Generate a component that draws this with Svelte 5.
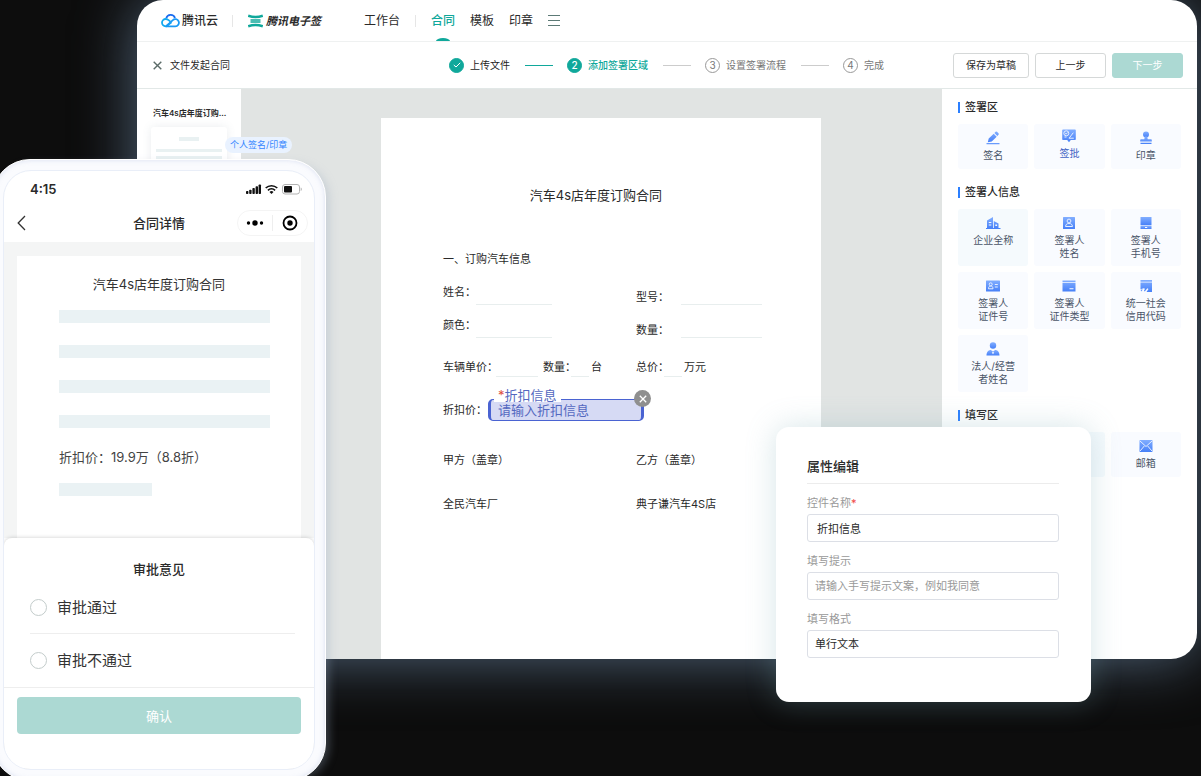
<script>
  const nav = ['模板', '印章'];
  const steps = [
    { label: '上传文件', state: 'done' },
    { label: '添加签署区域', state: 'active' },
    { label: '设置签署流程', state: 'todo' },
    { label: '完成', state: 'todo' }
  ];
  const groups = [
    {
      title: '签署区',
      tiles: [
        { icon: 'pen', lines: ['签名'] },
        { icon: 'approve', lines: ['签批'], active: true },
        { icon: 'stamp', lines: ['印章'] }
      ]
    },
    {
      title: '签署人信息',
      tiles: [
        { icon: 'company', lines: ['企业全称'], tinted: true },
        { icon: 'person', lines: ['签署人', '姓名'] },
        { icon: 'phone', lines: ['签署人', '手机号'] },
        { icon: 'idcard', lines: ['签署人', '证件号'] },
        { icon: 'card', lines: ['签署人', '证件类型'] },
        { icon: 'code', lines: ['统一社会', '信用代码'] },
        { icon: 'legal', lines: ['法人/经营', '者姓名'] }
      ]
    },
    {
      title: '填写区',
      tiles: [
        { icon: '', lines: [] },
        { icon: '', lines: [], tinted: true },
        { icon: 'mail', lines: ['邮箱'] }
      ]
    }
  ];
  let opinion = $state('');
  let fieldName = $state('折扣信息');
</script>

{#snippet icon(name)}
  <svg class="icon" viewBox="0 0 16 16" width="16" height="16" fill="url(#tileBlue)" aria-hidden="true">
    {#if name === 'pen'}
      <path d="M2.800 12.300 3.700 8.600l5-4.900 3 3-5 4.900zM9.400 3l1.200-1.200a1 1 0 0 1 1.400 0l1.500 1.500a1 1 0 0 1 0 1.400l-1.200 1.200z" />
      <rect x="1.500" y="13" width="13" height="1.200" />
    {:else if name === 'approve'}
      <path d="M2 1.500h12a.8.8 0 0 1 .8.8v9a.8.8 0 0 1-.8.8H9.8L8 14.2l-1.800-2.100H2a.8.8 0 0 1-.8-.8v-9A.8.8 0 0 1 2 1.500z" />
      <g fill="none" stroke="#e6efff" stroke-width="1">
        <circle cx="5.300" cy="5.300" r="2.500" />
        <path d="m4.200 5.300.9.900 1.500-1.700M8.300 9.900l4-5.200M7.800 10.200h5M3.500 9h2" />
      </g>
    {:else if name === 'stamp'}
      <circle cx="8" cy="4.500" r="3" />
      <path d="M6.800 6.500h2.400l.5 2.700h3.300a.8.800 0 0 1 .8.800v1.500H2.200V10a.8.800 0 0 1 .8-.8h3.300zM2.500 12.700h11v1.400h-11z" />
    {:else if name === 'company'}
      <path fill-rule="evenodd" d="M2 13V5.500L8 2v11zM3.800 7v1h2.500V7zm0 2.500v1h2.500v-1zM8.800 6l4.700 2.500V13H8.800zm1.500 3.500v1.500h1.800V9.500zM1 13h14.500v1H1z" />
    {:else if name === 'person'}
      <rect x="2" y="2" width="12" height="12" rx=".5" />
      <g fill="none" stroke="#e6efff"><circle cx="8" cy="6" r="1.900" /><path d="M4.500 11.500c.3-2.300 1.500-3 3.500-3s3.200.7 3.500 3z" /></g>
    {:else if name === 'phone'}
      <path d="M2.500 2h11v8.300h-11z" />
      <path fill-rule="evenodd" d="M2.500 11h11v3h-11zM7 12v1h2.200v-1z" />
    {:else if name === 'idcard'}
      <rect x="1" y="2.500" width="14" height="11" rx=".5" />
      <g fill="none" stroke="#e6efff"><circle cx="5.700" cy="6.300" r="1.500" /><path d="M3.500 10.800c0-2 .7-2.700 2.200-2.700S8 8.800 8 10.800zM9.800 6.500h3M9.800 9h3" /></g>
    {:else if name === 'card'}
      <path fill-rule="evenodd" d="M1.500 2.500h13v1.700h-13zM1.500 5h13v8.500h-13zM8.500 10.200v1h4v-1z" />
    {:else if name === 'code'}
      <path d="M2.500 2h11.500v1.700H2.500zM2.500 4.500H14V14H8.500l2-3-1.200-.8-2.500 3.300-.8-.7 1-2-1.300-.6-3.200 1z" />
      <path d="m2.500 12 2-1-.7 2.500z" />
    {:else if name === 'legal'}
      <circle cx="8" cy="4.500" r="3.200" />
      <path d="M1.500 14.500c0-3.400 1.800-5.500 4.300-5.500L8 10.500 10.200 9c2.500 0 4.300 2.100 4.300 5.500z" />
      <path fill="#e6efff" d="m8 10.500 1.200 1.300L8 13.300l-1.200-1.500z" />
    {:else if name === 'mail'}
      <rect x="1.500" y="2" width="13" height="12" rx=".8" />
      <path fill="none" stroke="#e6efff" d="m2 3 6 5.500L14 3M2 13l4.300-5M14 13 9.700 8" />
    {/if}
  </svg>
{/snippet}

<div class="stage">
  <svg class="defs" width="0" height="0" aria-hidden="true">
    <defs>
      <linearGradient id="tileBlue" x1="0" y1="0" x2="0" y2="1">
        <stop offset="0" stop-color="#82aeff" />
        <stop offset="1" stop-color="#4680f8" />
      </linearGradient>
    </defs>
  </svg>

  <main class="window">
    <header class="topbar">
      <a class="brand" href="#cloud">
        <svg width="19" height="15" viewBox="0 0 19 15" fill="none" stroke-width="1.800" aria-hidden="true">
          <path d="M5.200 5.400A4.600 4.600 0 0 1 14 5" stroke="#1a6cf0" />
          <path d="M10.500 9.200 5.200 13.300H4.600A3.600 3.600 0 0 1 4.700 6c1.400 0 2.300.5 3.200 1.300l1.500 1.300" stroke="#13a9ef" />
          <path d="M5 13.300h9.300a3.600 3.600 0 1 0-2.500-6.200L5 13.300" stroke="#1a9af5" stroke-linejoin="round" />
        </svg>
        腾讯云
      </a>
      <span class="rule first"></span>
      <a class="brand sign" href="#sign">
        <svg width="15" height="14" viewBox="0 0 15 14" fill="none" stroke="#10a89b" aria-hidden="true">
          <path stroke-width="2.400" d="M.2 1.700Q7.500 4.300 14.800 1.700M.2 12.300Q7.500 9.700 14.800 12.300" />
          <path stroke-width="1.500" d="M2.500 5.900h10M2.500 8.100h10" />
        </svg>
        腾讯电子签
      </a>
      <nav>
        <a href="#work">工作台</a>
        <span class="rule"></span>
        <a href="#contract" class="current">合同</a>
        {#each nav as item}<a href="#{item}">{item}</a>{/each}
        <button class="burger" aria-label="更多"><i></i><i></i><i></i></button>
      </nav>
    </header>

    <div class="stepbar">
      <div class="crumb">
        <button class="close" aria-label="关闭">
          <svg width="9" height="9" viewBox="0 0 9 9" stroke="#5b6b68" stroke-width="1.400"><path d="m.7.7 7.600 7.600M8.300.7.700 8.300" /></svg>
        </button>
        文件发起合同
      </div>
      <ol class="steps">
        {#each steps as step, i}
          <li class={step.state}>
            <span class="num">
              {#if step.state === 'done'}
                <svg width="8" height="6" viewBox="0 0 8 6" fill="none" stroke="#fff"><path d="m.8 3 2.200 2L7.200.8" /></svg>
              {:else}{i + 1}{/if}
            </span>
            {step.label}
          </li>
        {/each}
      </ol>
      <div class="actions">
        <button class="wide">保存为草稿</button>
        <button>上一步</button>
        <button class="primary">下一步</button>
      </div>
    </div>

    <div class="work">
      <aside class="pages">
        <h2>汽车4s店年度订购...</h2>
        <div class="thumb"><i class="short"></i><i></i><i></i></div>
        <span class="tag">个人签名/印章</span>
      </aside>

      <section class="canvas">
        <article class="paper">
          <h1>汽车4s店年度订购合同</h1>
          <h3>一、订购汽车信息</h3>
          <div class="row pair">
            <p>姓名：<i class="blank name"></i></p>
            <p class="low">型号：<i class="blank model"></i></p>
          </div>
          <div class="row pair">
            <p>颜色：<i class="blank name"></i></p>
            <p class="low">数量：<i class="blank model"></i></p>
          </div>
          <div class="row price">
            <p>车辆单价：<i class="blank unit"></i>数量：<i class="blank count"></i>台</p>
            <p>总价：<i class="blank count"></i>万元</p>
          </div>
          <div class="row discount">
            <label for="discount">折扣价：</label>
            <div class="field">
              <input id="discount" placeholder="请输入折扣信息" />
              <span class="legend"><b>*</b>折扣信息</span>
              <button aria-label="删除">
                <svg width="8" height="8" viewBox="0 0 8 8" stroke="#fff" stroke-width="1.300"><path d="m.8.800 6.400 6.400M7.200.8.800 7.200" /></svg>
              </button>
            </div>
          </div>
          <div class="row seal"><p>甲方（盖章）</p><p>乙方（盖章）</p></div>
          <div class="row party"><p>全民汽车厂</p><p>典子谦汽车4S店</p></div>
        </article>
      </section>

      <aside class="tools">
        {#each groups as group}
          <h2>{group.title}</h2>
          <div class="tiles">
            {#each group.tiles as tile}
              <button class:active={tile.active} class:tinted={tile.tinted}>
                {@render icon(tile.icon)}
                {#each tile.lines as line}<span>{line}</span>{/each}
              </button>
            {/each}
          </div>
        {/each}
      </aside>
    </div>
  </main>

  <form class="props">
    <h2>属性编辑</h2>
    <label for="p-name">控件名称<b>*</b></label>
    <input id="p-name" class="named" bind:value={fieldName} />
    <label for="p-hint">填写提示</label>
    <input id="p-hint" placeholder="请输入手写提示文案，例如我同意" />
    <label for="p-format">填写格式</label>
    <select id="p-format"><option>单行文本</option></select>
  </form>

  <section class="phone">
    <div class="screen">
      <div class="status">
        <span>4:15</span>
        <svg width="56" height="12" viewBox="0 0 56 12" aria-hidden="true">
          <g fill="#111">
            <rect x="0" y="8" width="2.400" height="3" rx=".8" /><rect x="3.200" y="6.800" width="2.400" height="4.200" rx=".8" />
            <rect x="6.400" y="5" width="2.400" height="6" rx=".8" /><rect x="9.600" y="3.300" width="2.400" height="7.700" rx=".8" /><rect x="12.600" y="1.500" width="2.400" height="9.500" rx=".8" />
            <path d="m25.500 11-2-2.100a2.900 2.900 0 0 1 4 0z" />
            <rect x="38" y="3" width="8" height="6.600" rx="1" />
          </g>
          <g fill="none" stroke="#111" stroke-width="1.600"><path d="M19.700 5a8.400 8.400 0 0 1 11.600 0M21.900 7.300a5.200 5.200 0 0 1 7.200 0" /></g>
          <rect x="36.500" y="1.500" width="17" height="9.500" rx="2.500" fill="none" stroke="#b3b3b3" />
          <path d="M54.700 4.500c1.500.5 1.500 3 0 3.500z" fill="#b3b3b3" />
        </svg>
      </div>
      <div class="titlebar">
        <button class="back" aria-label="返回">
          <svg width="9" height="16" viewBox="0 0 9 16" fill="none" stroke="#333" stroke-width="1.300"><path d="M8 1 1.200 8 8 15" /></svg>
        </button>
        <h2>合同详情</h2>
        <div class="capsule">
          <button aria-label="菜单"><svg width="18" height="8" viewBox="0 0 18 8"><circle cx="2.500" cy="4" r="1.700" /><circle cx="9" cy="4" r="2.700" /><circle cx="15.500" cy="4" r="1.700" /></svg></button>
          <button aria-label="退出"><svg width="16" height="16" viewBox="0 0 16 16"><circle cx="8" cy="8" r="6.500" fill="none" stroke="#000" stroke-width="1.800" /><circle cx="8" cy="8" r="2.700" /></svg></button>
        </div>
      </div>
      <div class="preview">
        <div class="sheet">
          <h3>汽车4s店年度订购合同</h3>
          <i></i><i></i><i></i><i></i>
          <p>折扣价：19.9万（8.8折）</p>
          <i class="part"></i>
        </div>
      </div>
      <form class="opinion">
        <h3>审批意见</h3>
        <label><input type="radio" name="opinion" value="pass" bind:group={opinion} />审批通过</label>
        <label><input type="radio" name="opinion" value="reject" bind:group={opinion} />审批不通过</label>
        <div class="confirm"><button type="button">确认</button></div>
      </form>
    </div>
  </section>
</div>

<style>
  :global(body) {
    background: #0d0d0d;
  }
  .stage {
    position: relative;
    min-height: 100vh;
    overflow: hidden;
    background: #0d0d0d;
    color: #2a2a2a;
    font: 11px/16px Inter, 'Noto Sans CJK SC', sans-serif;
  }
  .stage :is(h1, h2, h3, p, ol) {
    margin: 0;
    padding: 0;
    font-size: inherit;
    font-weight: 400;
  }
  .stage :is(button, input, select) {
    box-sizing: border-box;
    margin: 0;
    padding: 0;
    border: 0;
    background: none;
    color: inherit;
    font: inherit;
    appearance: none;
    outline: none;
  }
  .stage button {
    cursor: pointer;
  }
  .stage a {
    color: inherit;
    text-decoration: none;
  }
  .stage svg {
    display: block;
    flex: none;
  }
  .stage .defs {
    position: absolute;
  }

  .window {
    display: flex;
    flex-direction: column;
    margin: 0 4px 0 137px;
    border-radius: 26px;
    background: #fff;
    box-shadow: 0 0 60px rgba(120, 150, 185, 0.65);
  }
  .topbar {
    display: flex;
    align-items: center;
    height: 41px;
    padding-left: 24px;
    border-bottom: 1px solid #eff1f1;
    font-size: 12px;
  }
  .brand {
    display: flex;
    align-items: center;
    gap: 2px;
    font-weight: 500;
  }
  .rule {
    width: 1px;
    height: 12px;
    background: #e6e6e6;
  }
  .rule.first {
    margin: 0 15px 0 14px;
  }
  .sign {
    gap: 3px;
    font-size: 11px;
    font-style: italic;
    font-weight: 700;
  }
  nav {
    display: flex;
    align-items: center;
    align-self: stretch;
    gap: 15px;
    margin-left: 43px;
  }
  .current {
    display: flex;
    position: relative;
    align-items: center;
    align-self: stretch;
    color: #10a89b !important;
    font-weight: 500;
  }
  .current::after {
    position: absolute;
    bottom: 0;
    left: 50%;
    width: 14px;
    height: 3px;
    border-radius: 50% 50% 0 0 / 100% 100% 0 0;
    background: #10a89b;
    content: '';
    transform: translateX(-50%);
  }
  .burger {
    display: grid;
    gap: 4px;
    width: 12px;
    margin-left: 2px;
  }
  .burger i {
    height: 1px;
    background: #5c7a76;
  }

  .stepbar {
    display: grid;
    grid-template-columns: 296px 1fr auto;
    align-items: center;
    height: 46px;
    padding: 0 14px 0 16px;
    border-bottom: 1px solid #e2e8e7;
    font-size: 10px;
  }
  .crumb {
    display: flex;
    align-items: center;
    gap: 8px;
  }
  .steps {
    display: flex;
    align-items: center;
    gap: 15px;
    list-style: none;
    color: #777;
  }
  .steps li {
    display: flex;
    align-items: center;
    gap: 6px;
  }
  .steps li + li::before {
    width: 28px;
    height: 1px;
    margin-right: 8px;
    background: #ccc;
    content: '';
  }
  .steps .num {
    display: grid;
    box-sizing: border-box;
    width: 15px;
    height: 15px;
    border: 1px solid #999;
    border-radius: 50%;
    line-height: 13px;
    place-items: center;
  }
  .steps .done {
    color: #222;
  }
  .steps .active {
    color: #10a89b;
    font-weight: 500;
  }
  .steps .active::before {
    background: #10a89b !important;
  }
  .steps :is(.done, .active) .num {
    border-color: #10a89b;
    background: #10a89b;
    color: #fff;
  }
  .actions {
    display: flex;
    gap: 6px;
  }
  .actions button {
    width: 71px;
    height: 25px;
    border: 1px solid #d5d8d8;
    border-radius: 3px;
  }
  .actions .wide {
    width: 76px;
  }
  .actions .primary {
    border-color: #acd9d3;
    background: #acd9d3;
    color: #fff;
  }

  .work {
    display: grid;
    grid-template-columns: 104px 1fr 255px;
  }
  .pages {
    position: relative;
    padding: 16px 0 0 14px;
  }
  .pages h2 {
    padding-left: 2px;
    font-size: 8px;
    font-weight: 600;
    white-space: nowrap;
  }
  .thumb {
    display: grid;
    gap: 4px;
    width: 66px;
    margin-top: 6px;
    padding: 10px 5px 30px;
    border-radius: 3px;
    background: #fff;
    box-shadow: 0 0 10px rgba(80, 110, 120, 0.12);
  }
  .thumb i {
    height: 3px;
    background: #e9f1f2;
  }
  .thumb .short {
    width: 20px;
    height: 4px;
    margin: 0 auto 4px;
  }
  .tag {
    position: absolute;
    top: 48px;
    left: 88px;
    padding: 0 5px;
    border-radius: 8px;
    background: #e9f2ff;
    color: #3385ff;
    font-size: 9px;
    white-space: nowrap;
  }
  .canvas {
    padding: 29px 121px 0 140px;
    background: #e1e4e3;
  }
  .paper {
    height: 100%;
    box-sizing: border-box;
    padding: 67px 10px 147px 62px;
    background: #fff;
  }
  .paper h1 {
    margin-right: 62px;
    font-size: 13px;
    line-height: 20px;
    text-align: center;
  }
  .paper h3 {
    margin-top: 46px;
  }
  .row {
    display: grid;
    grid-template-columns: 193px 1fr;
  }
  .row p {
    display: flex;
    align-items: flex-start;
    white-space: nowrap;
  }
  .pair {
    height: 21px;
    margin-top: 17px;
  }
  .pair + .pair {
    margin-top: 12px;
  }
  .blank {
    align-self: flex-end;
    border-bottom: 1px solid #e8eeee;
  }
  .pair .low {
    align-items: flex-end;
  }
  .name {
    width: 76px;
  }
  .model {
    width: 81px;
    margin-left: 12px;
  }
  .price {
    height: 18px;
    margin-top: 21px;
  }
  .unit {
    width: 42px;
    margin: 0 5px 0 -2px;
  }
  .count {
    width: 18px;
    margin: 0 2px 0 -5px;
  }
  .discount {
    grid-template-columns: 45px 156px;
    align-items: center;
    margin-top: 22px;
  }
  .field {
    position: relative;
  }
  .field input {
    display: block;
    width: 100%;
    height: 22px;
    padding-left: 7px;
    border: 1px solid #4a63d2;
    border-width: 1px 3px;
    border-radius: 5px;
    background: #d6daf4;
    color: #5468c0;
    font-size: 13px;
  }
  .field input::placeholder,
  .legend {
    color: #5468c0;
    opacity: 1;
  }
  .legend {
    position: absolute;
    top: -10px;
    left: 6px;
    padding: 0 4px;
    background: #fff;
    font-size: 13px;
    line-height: 13px;
  }
  .legend b {
    color: #e0503c;
    font-weight: 400;
  }
  .field button {
    display: grid;
    position: absolute;
    top: -9px;
    right: -7px;
    width: 17px;
    height: 17px;
    border-radius: 50%;
    background: #8f8f8f;
    place-items: center;
  }
  .seal {
    margin-top: 31px;
  }
  .party {
    margin-top: 28px;
  }

  .tools {
    padding: 10px 16px 0;
  }
  .tools h2 {
    display: flex;
    align-items: center;
    gap: 5px;
    margin-bottom: 9px;
    font-weight: 500;
  }
  .tools h2::before {
    width: 2px;
    height: 11px;
    background: #2b7fff;
    content: '';
  }
  .tiles {
    display: grid;
    grid-template-columns: repeat(3, 1fr);
    gap: 6px;
    margin-bottom: 15px;
  }
  .tiles button {
    display: flex;
    flex-direction: column;
    align-items: center;
    min-height: 45px;
    padding: 6px 0;
    border-radius: 3px;
    background: #f9fbff;
    color: #4a5568;
    font-size: 10px;
    line-height: 13px;
  }
  .tiles .icon {
    margin-bottom: 3px;
  }
  .tiles .active {
    padding-top: 4px;
    color: #3f62c4;
  }
  .tiles .tinted {
    background: #f5fafd;
  }

  .props {
    display: flex;
    position: absolute;
    top: 427px;
    right: 110px;
    flex-direction: column;
    box-sizing: border-box;
    width: 315px;
    padding: 30px 32px 33px 31px;
    border-radius: 13px;
    background: #fff;
    box-shadow: 0 0 30px rgba(120, 170, 180, 0.3);
  }
  .props h2 {
    margin-bottom: 11px;
    padding-bottom: 8px;
    border-bottom: 1px solid #ececec;
    font-size: 13px;
    font-weight: 500;
    line-height: 18px;
  }
  .props label {
    margin-bottom: 3px;
    color: #999;
  }
  .props b {
    color: #f04848;
    font-weight: 400;
  }
  .props :is(input, select) {
    height: 28px;
    margin-bottom: 11px;
    padding: 0 7px;
    border: 1px solid #dcdfe6;
    border-radius: 3px;
  }
  .props .named {
    padding-left: 9px;
  }
  .props ::placeholder {
    color: #999;
    opacity: 1;
  }

  .phone {
    position: absolute;
    top: 159px;
    left: -8px;
    width: 312px;
    padding: 10px;
    border: 1px solid #fff;
    border-radius: 38px;
    background: #fafbfe;
    box-shadow:
      inset 0 0 5px rgba(160, 175, 215, 0.35),
      6px 2px 10px -3px rgba(150, 165, 190, 0.35);
  }
  .screen {
    overflow: hidden;
    border: 1px solid #e9eef8;
    border-radius: 28px;
    background: #fff;
  }
  .status {
    display: flex;
    align-items: center;
    justify-content: space-between;
    padding: 9px 12px 6px 26px;
    font-size: 13px;
    font-weight: 600;
    line-height: 18px;
  }
  .titlebar {
    display: grid;
    grid-template-columns: 1fr auto 1fr;
    align-items: center;
    height: 38px;
    padding: 0 6px;
  }
  .titlebar h2 {
    font-size: 13px;
    font-weight: 500;
  }
  .back {
    justify-self: start;
    padding-left: 7px !important;
  }
  .capsule {
    display: flex;
    align-items: center;
    justify-self: end;
    box-sizing: border-box;
    width: 71px;
    height: 26px;
    border: 1px solid #f4f4f4;
    border-radius: 13px;
  }
  .capsule button {
    display: grid;
    flex: 1;
    height: 16px;
    place-items: center;
  }
  .capsule button + button {
    border-left: 1px solid #eee;
  }
  .preview {
    padding: 14px 13px 0;
    background: #f4f5f5;
  }
  .sheet {
    padding: 18px 31px 42px 42px;
    background: #fff;
  }
  .sheet h3 {
    margin: 0 0 16px -11px;
    color: #333;
    font-size: 13px;
    line-height: 20px;
    text-align: center;
  }
  .sheet i {
    display: block;
    height: 13px;
    margin-bottom: 22px;
    background: #eaf2f4;
  }
  .sheet p {
    margin: -3px 0 16px;
    color: #444;
    font-size: 13px;
    line-height: 20px;
  }
  .sheet .part {
    width: 93px;
    margin: 0;
  }
  .opinion {
    display: flex;
    position: relative;
    flex-direction: column;
    border-radius: 8px 8px 0 0;
    background: #fff;
    box-shadow: 0 0 4px rgba(0, 0, 0, 0.2);
  }
  .opinion h3 {
    padding: 21px 0 3px;
    font-size: 13px;
    font-weight: 500;
    line-height: 20px;
    text-align: center;
  }
  .opinion label {
    display: flex;
    align-items: center;
    gap: 10px;
    height: 51px;
    margin: 0 19px 0 26px;
    font-size: 15px;
    color: #333;
  }
  .opinion label + label {
    height: 53px;
    border-top: 1px solid #eee;
  }
  .opinion input {
    width: 17px;
    height: 17px;
    border: 1px solid #c3cccb;
    border-radius: 50%;
  }
  .opinion input:checked {
    border: 5px solid #10a89b;
  }
  .confirm {
    padding: 9px 13px 35px;
    border-top: 1px solid #eee;
  }
  .confirm button {
    width: 100%;
    height: 37px;
    border-radius: 4px;
    background: #acd9d3;
    color: #fff;
    font-size: 13px;
  }
</style>
